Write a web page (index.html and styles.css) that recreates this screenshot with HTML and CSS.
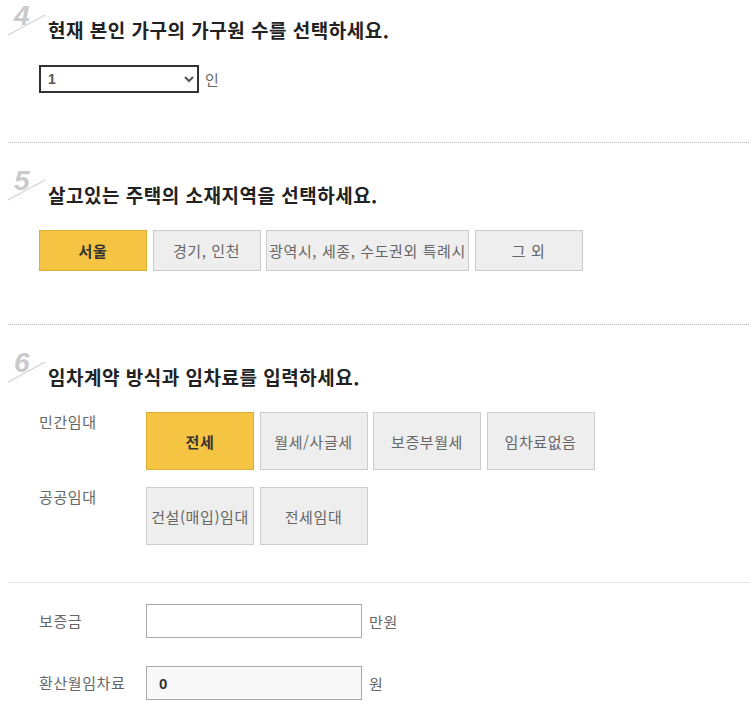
FILE: index.html
```html
<!DOCTYPE html>
<html lang="ko">

<head>
    <meta charset="UTF-8">
    <meta name="viewport" content="width=device-width, initial-scale=1.0">
    <title>임차 정보 입력</title>
    <link rel="stylesheet" href="styles.css">
</head>

<body>

    <div class="form-wrap">

        <!-- Step 4 -->
        <div class="step step-first">
            <h2 class="step-title">
                <span class="step-num">4</span>
                <svg class="step-slash" width="40" height="24" viewBox="0 0 40 24"><line x1="1" y1="22" x2="38" y2="2" stroke="#c8c8c8" stroke-width="1"/></svg>
                현재 본인 가구의 가구원 수를 선택하세요.
            </h2>
            <div class="field-line">
                <select class="count-select">
                    <option>1</option>
                    <option>2</option>
                    <option>3</option>
                    <option>4</option>
                    <option>5</option>
                </select>
                <span class="unit">인</span>
            </div>
        </div>

        <!-- Step 5 -->
        <div class="step">
            <h2 class="step-title">
                <span class="step-num">5</span>
                <svg class="step-slash" width="40" height="24" viewBox="0 0 40 24"><line x1="1" y1="22" x2="38" y2="2" stroke="#c8c8c8" stroke-width="1"/></svg>
                살고있는 주택의 소재지역을 선택하세요.
            </h2>
            <div class="btn-group">
                <button class="opt on">서울</button>
                <button class="opt">경기, 인천</button>
                <button class="opt wide">광역시, 세종, 수도권외 특례시</button>
                <button class="opt">그 외</button>
            </div>
        </div>

        <!-- Step 6 -->
        <div class="step step-last">
            <h2 class="step-title">
                <span class="step-num">6</span>
                <svg class="step-slash" width="40" height="24" viewBox="0 0 40 24"><line x1="1" y1="22" x2="38" y2="2" stroke="#c8c8c8" stroke-width="1"/></svg>
                임차계약 방식과 임차료를 입력하세요.
            </h2>
            <div class="type-row">
                <div class="type-label">민간임대</div>
                <div class="btn-group">
                    <button class="opt tall on">전세</button>
                    <button class="opt tall">월세/사글세</button>
                    <button class="opt tall">보증부월세</button>
                    <button class="opt tall">임차료없음</button>
                </div>
            </div>
            <div class="type-row">
                <div class="type-label">공공임대</div>
                <div class="btn-group">
                    <button class="opt tall">건설(매입)임대</button>
                    <button class="opt tall">전세임대</button>
                </div>
            </div>
        </div>

        <!-- Amounts -->
        <div class="amounts">
            <div class="amount-row">
                <label class="type-label" for="deposit">보증금</label>
                <input type="text" id="deposit" class="amount-input">
                <span class="unit">만원</span>
            </div>
            <div class="amount-row">
                <label class="type-label" for="monthly">환산월임차료</label>
                <input type="text" id="monthly" class="amount-input readonly" value="0" readonly>
                <span class="unit">원</span>
            </div>
        </div>

    </div>

</body>

</html>
```

FILE: styles.css
```css
body {
    margin: 0;
    padding: 0;
    background: #fff;
    font-family: "Noto Sans CJK KR", "Noto Sans", sans-serif;
    color: #333;
}

.form-wrap {
    margin-left: 8px;
}

.step {
    padding: 39px 0 53px 31px;
    border-bottom: 1px dotted #bbb;
}

.step-first {
    padding-top: 17px;
    padding-bottom: 49px;
}

.step-last {
    padding-bottom: 37px;
    border-bottom: 1px solid #e6e6e6;
}

.step-title {
    position: relative;
    margin: 0 0 22px 9px;
    font-size: 19px;
    line-height: 26px;
    font-weight: bold;
    color: #222;
    letter-spacing: 0.5px;
}

/* big grey step number with a thin slash under it */
.step-num {
    position: absolute;
    left: -34px;
    top: -14px;
    font-family: "Liberation Sans", Arial, sans-serif;
    font-size: 28px;
    font-weight: bold;
    font-style: italic;
    letter-spacing: 0;
    color: #cacaca;
}

.step-slash {
    position: absolute;
    left: -41px;
    top: -4px;
}

.field-line {
    display: flex;
    align-items: center;
    gap: 6px;
}

.count-select {
    width: 160px;
    height: 28px;
    border: 2px solid #333;
    border-radius: 0;
    padding: 0 3px;
    font-family: "Liberation Sans", Arial, sans-serif;
    font-size: 14px;
    font-weight: bold;
    color: #555;
    background: #fff;
}

.unit {
    font-size: 15px;
    letter-spacing: 0.6px;
    color: #666;
}

.btn-group {
    display: flex;
    flex-wrap: wrap;
    gap: 5.5px;
}

.opt {
    width: 108px;
    height: 41px;
    padding: 0;
    background: #eee;
    border: 1px solid #ccc;
    font-family: "Noto Sans CJK KR", sans-serif;
    font-size: 15px;
    letter-spacing: 0.6px;
    color: #666;
    cursor: pointer;
}

.opt.wide {
    width: 203px;
}

.opt.tall {
    height: 58px;
}

.opt.on {
    background: #f6c443;
    border-color: #ddaf35;
    color: #333;
    font-weight: bold;
}

.type-row {
    display: flex;
    align-items: flex-start;
    margin-bottom: 17px;
}

.type-row:last-child {
    margin-bottom: 0;
}

.type-label {
    width: 107px;
    flex-shrink: 0;
    font-size: 15px;
    line-height: 20px;
    letter-spacing: 0.6px;
    color: #666;
}

.amounts {
    padding: 21px 0 0 31px;
}

.amount-row {
    display: flex;
    align-items: center;
    margin-bottom: 28px;
}

.amount-input {
    box-sizing: border-box;
    width: 216px;
    height: 34px;
    margin-right: 7px;
    padding: 0 12px;
    border: 1px solid #aaa;
    font-family: "Liberation Sans", Arial, sans-serif;
    font-size: 15px;
    font-weight: bold;
    color: #333;
    background: #fff;
}

.amount-input.readonly {
    background: #f8f8f8;
}
```
